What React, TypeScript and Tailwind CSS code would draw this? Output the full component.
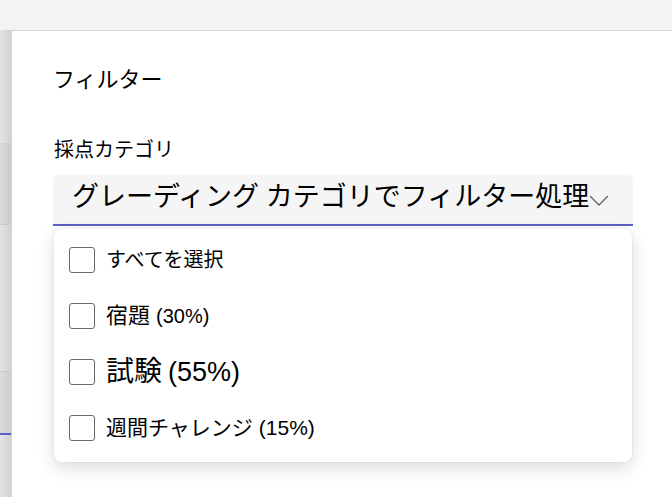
import { useState } from 'react';

interface CategoryOption {
  id: string;
  name: string;
  weight?: number;
  nameSize: string;
  weightSize: string;
}

const options: CategoryOption[] = [
  { id: 'all', name: 'すべてを選択', nameSize: 'text-[20px]', weightSize: 'text-[20px]' },
  { id: 'homework', name: '宿題', weight: 30, nameSize: 'text-[22px]', weightSize: 'text-[20px]' },
  { id: 'exam', name: '試験', weight: 55, nameSize: 'text-[28px]', weightSize: 'text-[27px]' },
  { id: 'weekly', name: '週間チャレンジ', weight: 15, nameSize: 'text-[21px]', weightSize: 'text-[21px]' },
];

const fontStack = "font-['Roboto','Noto_Sans_CJK_JP',sans-serif]";

function ChevronDown() {
  return (
    <svg width="20" height="12" viewBox="0 0 20 12" fill="none" className="shrink-0">
      <path d="M1.5 1.5 L10 10 L18.5 1.5" stroke="#616161" strokeWidth="1.3" strokeLinecap="round" strokeLinejoin="round" />
    </svg>
  );
}

function Checkbox({ checked, onToggle }: { checked: boolean; onToggle: () => void }) {
  return (
    <button
      type="button"
      onClick={onToggle}
      className={`w-[26px] h-[26px] shrink-0 rounded-[3px] border border-[#666666] flex items-center justify-center ${
        checked ? 'bg-[#5b5fc7] border-[#5b5fc7]' : 'bg-white'
      }`}
    >
      {checked && (
        <svg width="14" height="14" viewBox="0 0 14 14" fill="none">
          <path d="M2.5 7.5 L5.5 10.5 L11.5 3.5" stroke="white" strokeWidth="1.6" />
        </svg>
      )}
    </button>
  );
}

// 背景側のリスト（ダイアログの左にわずかに見える部分）
function BackdropStrip() {
  return (
    <div className="w-[11px] shrink-0 flex flex-col bg-gradient-to-r from-[#e4e4e4] to-[#d2d2d2]">
      <div className="h-[114px] border-b border-[#cfcfcf]" />
      <div className="h-[81px] border-b border-[#c9c9c9] bg-gradient-to-r from-[#dadada] to-[#cbcbcb]" />
      <div className="h-[147px] border-b border-[#cacaca]" />
      <div className="h-[63px] border-b-2 border-[#5b5fc7] bg-gradient-to-r from-[#dcdcdc] to-[#cdcdcd]" />
      <div className="flex-1" />
    </div>
  );
}

export default function App() {
  const [selected, setSelected] = useState<string[]>([]);

  const toggle = (id: string) => {
    if (id === 'all') {
      setSelected(selected.length === options.length ? [] : options.map((o) => o.id));
      return;
    }
    setSelected((prev) => (prev.includes(id) ? prev.filter((x) => x !== id) : [...prev, id]));
  };

  return (
    <div className={`w-[672px] h-[497px] overflow-hidden bg-[#f3f3f3] flex ${fontStack} text-[#111111]`}>
      <div className="flex-1 flex flex-col">
        <div className="h-[30px] shrink-0" />
        <div className="flex-1 flex">
          <BackdropStrip />
          <div className="flex-1 bg-white border-t border-l border-r border-[#d4d4d4] pt-[35px] pl-[41px] pr-[39px]">
            <h2 className="h-[28px] leading-[28px] text-[22px] font-normal text-black">フィルター</h2>
            <div className="mt-[44px] h-[24px] leading-[24px] pl-[1px] text-[20px] text-black">採点カテゴリ</div>

            <div className="relative mt-[13px]">
              <button
                type="button"
                className="w-full h-[51px] bg-[#f5f5f5] rounded-t-[6px] border-b-2 border-[#5b5fc7] pl-[19px] pr-[24px] pb-[6px] flex items-center justify-between"
              >
                <span className="text-[27px] leading-[32px] text-black whitespace-nowrap">
                  グレーディング カテゴリでフィルター処理
                </span>
                <span className="pt-[8px]">
                  <ChevronDown />
                </span>
              </button>

              <div className="absolute left-[1px] top-[54px] w-[578px] bg-white rounded-[8px] shadow-[0_6px_18px_rgba(0,0,0,0.14),0_0_3px_rgba(0,0,0,0.08)] pt-[3px] pb-[6px] pl-[15px]">
                {options.map((opt) => (
                  <div key={opt.id} className="h-[56px] flex items-center gap-[11px]">
                    <Checkbox checked={selected.includes(opt.id)} onToggle={() => toggle(opt.id)} />
                    <span className="flex items-baseline text-black whitespace-nowrap">
                      <span className={`${opt.nameSize} leading-[30px]`}>{opt.name}</span>
                      {opt.weight !== undefined && (
                        <span
                          className={`${opt.weightSize} leading-[30px] ml-[6px] font-['Liberation_Sans',Arial,sans-serif]`}
                        >
                          ({opt.weight}%)
                        </span>
                      )}
                    </span>
                  </div>
                ))}
              </div>
            </div>
          </div>
        </div>
      </div>
      <div className="w-[1px] shrink-0 bg-[#5fb3b8]" />
    </div>
  );
}
